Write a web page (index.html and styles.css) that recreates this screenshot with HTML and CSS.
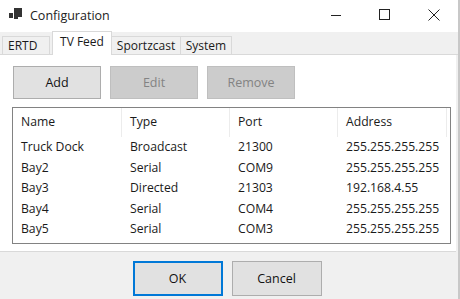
FILE: index.html
```html
<!DOCTYPE html>
<html lang="en">
<head>
    <meta charset="UTF-8">
    <title>Configuration</title>
    <link rel="stylesheet" href="styles.css">
</head>
<body>
    <div class="window">
        <div class="titlebar">
            <svg class="app-icon" width="16" height="14" viewBox="0 0 16 14">
                <rect x="0" y="5" width="4" height="5" fill="#333"/>
                <path d="M5 0 H13 V9 H9 V11 H5 Z" fill="#333"/>
            </svg>
            <span class="title">Configuration</span>
            <div class="caption-buttons">
                <svg width="49" height="32" viewBox="0 0 49 32"><line x1="20" y1="15.5" x2="30" y2="15.5" stroke="#222" stroke-width="1"/></svg>
                <svg width="49" height="32" viewBox="0 0 49 32"><rect x="19.5" y="9.5" width="10" height="10" fill="none" stroke="#222" stroke-width="1"/></svg>
                <svg width="49" height="32" viewBox="0 0 49 32"><path d="M19.5 9.5 L30.5 20.5 M30.5 9.5 L19.5 20.5" stroke="#222" stroke-width="1"/></svg>
            </div>
        </div>

        <div class="tabs">
            <div class="tab t-ertd">ERTD</div>
            <div class="tab active t-tv">TV Feed</div>
            <div class="tab t-sport">Sportzcast</div>
            <div class="tab t-sys">System</div>
        </div>

        <div class="panel">
            <div class="toolbar">
                <button class="btn">Add</button>
                <button class="btn disabled">Edit</button>
                <button class="btn disabled">Remove</button>
            </div>

            <div class="listview">
                <div class="row header">
                    <div class="col c1">Name</div>
                    <div class="col c2">Type</div>
                    <div class="col c3">Port</div>
                    <div class="col c4">Address</div>
                </div>
                <div class="row">
                    <div class="col c1">Truck Dock</div>
                    <div class="col c2">Broadcast</div>
                    <div class="col c3">21300</div>
                    <div class="col c4">255.255.255.255</div>
                </div>
                <div class="row">
                    <div class="col c1">Bay2</div>
                    <div class="col c2">Serial</div>
                    <div class="col c3">COM9</div>
                    <div class="col c4">255.255.255.255</div>
                </div>
                <div class="row">
                    <div class="col c1">Bay3</div>
                    <div class="col c2">Directed</div>
                    <div class="col c3">21303</div>
                    <div class="col c4">192.168.4.55</div>
                </div>
                <div class="row">
                    <div class="col c1">Bay4</div>
                    <div class="col c2">Serial</div>
                    <div class="col c3">COM4</div>
                    <div class="col c4">255.255.255.255</div>
                </div>
                <div class="row">
                    <div class="col c1">Bay5</div>
                    <div class="col c2">Serial</div>
                    <div class="col c3">COM3</div>
                    <div class="col c4">255.255.255.255</div>
                </div>
            </div>
        </div>

        <div class="footer">
            <button class="btn dlg default">OK</button>
            <button class="btn dlg">Cancel</button>
        </div>
    </div>
</body>
</html>
```

FILE: styles.css
```css
body {
    margin: 0;
    padding: 0;
    background: #f0f0f0;
    font-family: 'Open Sans', 'Noto Sans', sans-serif;
    font-size: 12px;
    color: #1a1a1a;
}

.window {
    width: 460px;
    height: 299px;
    background: #f0f0f0;
    overflow: hidden;
    box-sizing: border-box;
    border-right: 2px solid #c8c8c8;
}

.titlebar {
    height: 32px;
    background: #fff;
    display: flex;
    align-items: center;
}

.app-icon {
    margin-left: 9px;
    margin-right: 5px;
    margin-top: -2px;
}

.title {
    font-size: 12.5px;
    color: #222;
    margin-top: -2px;
}

.caption-buttons {
    margin-left: auto;
    display: flex;
}

/* tab strip */
.tabs {
    height: 23px;
    display: flex;
    align-items: flex-end;
    padding-left: 2px;
    box-sizing: border-box;
    border-bottom: 1px solid #d9d9d9;
}

.tab {
    height: 18px;
    line-height: 17px;
    border: 1px solid #d9d9d9;
    border-bottom: none;
    background: #f0f0f0;
    font-size: 12px;
    box-sizing: border-box;
    text-align: center;
}

.t-ertd { width: 48px; text-align: left; padding-left: 5px; }
.t-tv { width: 60px; }
.t-sport { width: 70px; margin-left: -1px; }
.t-sys { width: 52px; margin-left: -1px; }

.tab.active {
    height: 24px;
    line-height: 20px;
    background: #fff;
    margin: 0 0 -1px 2px;
    position: relative;
    z-index: 1;
}

.panel {
    height: 197px;
    background: #fff;
    margin-right: 2px;
    border-bottom: 1px solid #d9d9d9;
    padding: 11px 9px 0 12px;
    box-sizing: border-box;
}

.toolbar {
    display: flex;
    gap: 9px;
    padding-left: 1px;
}

.btn {
    width: 88px;
    height: 33px;
    background: #e1e1e1;
    border: 1px solid #adadad;
    font-family: inherit;
    font-size: 12.5px;
    color: #111;
    padding: 0;
}

.btn.disabled {
    background: #cccccc;
    border-color: #bfbfbf;
    color: #838383;
}

.listview {
    margin-top: 8px;
    height: 137px;
    border: 1px solid #828282;
    box-sizing: border-box;
    width: 439px;
}

.row {
    display: flex;
    height: 20.6px;
    line-height: 20.6px;
}

.row.header {
    height: 29px;
    line-height: 28px;
}

.col {
    padding-left: 8px;
    box-sizing: border-box;
    white-space: nowrap;
    font-size: 12.2px;
}

.header .col {
    border-right: 1px solid #ececec;
}

.c1 { width: 109px; }
.c2 { width: 108px; }
.c3 { width: 108px; }
.c4 { width: 109px; }

.footer {
    display: flex;
    justify-content: center;
    gap: 9px;
    padding-top: 9px;
    padding-right: 4px;
}

.btn.dlg {
    width: 90px;
    height: 35px;
}

.btn.default {
    border: 2px solid #0078d7;
}
```
